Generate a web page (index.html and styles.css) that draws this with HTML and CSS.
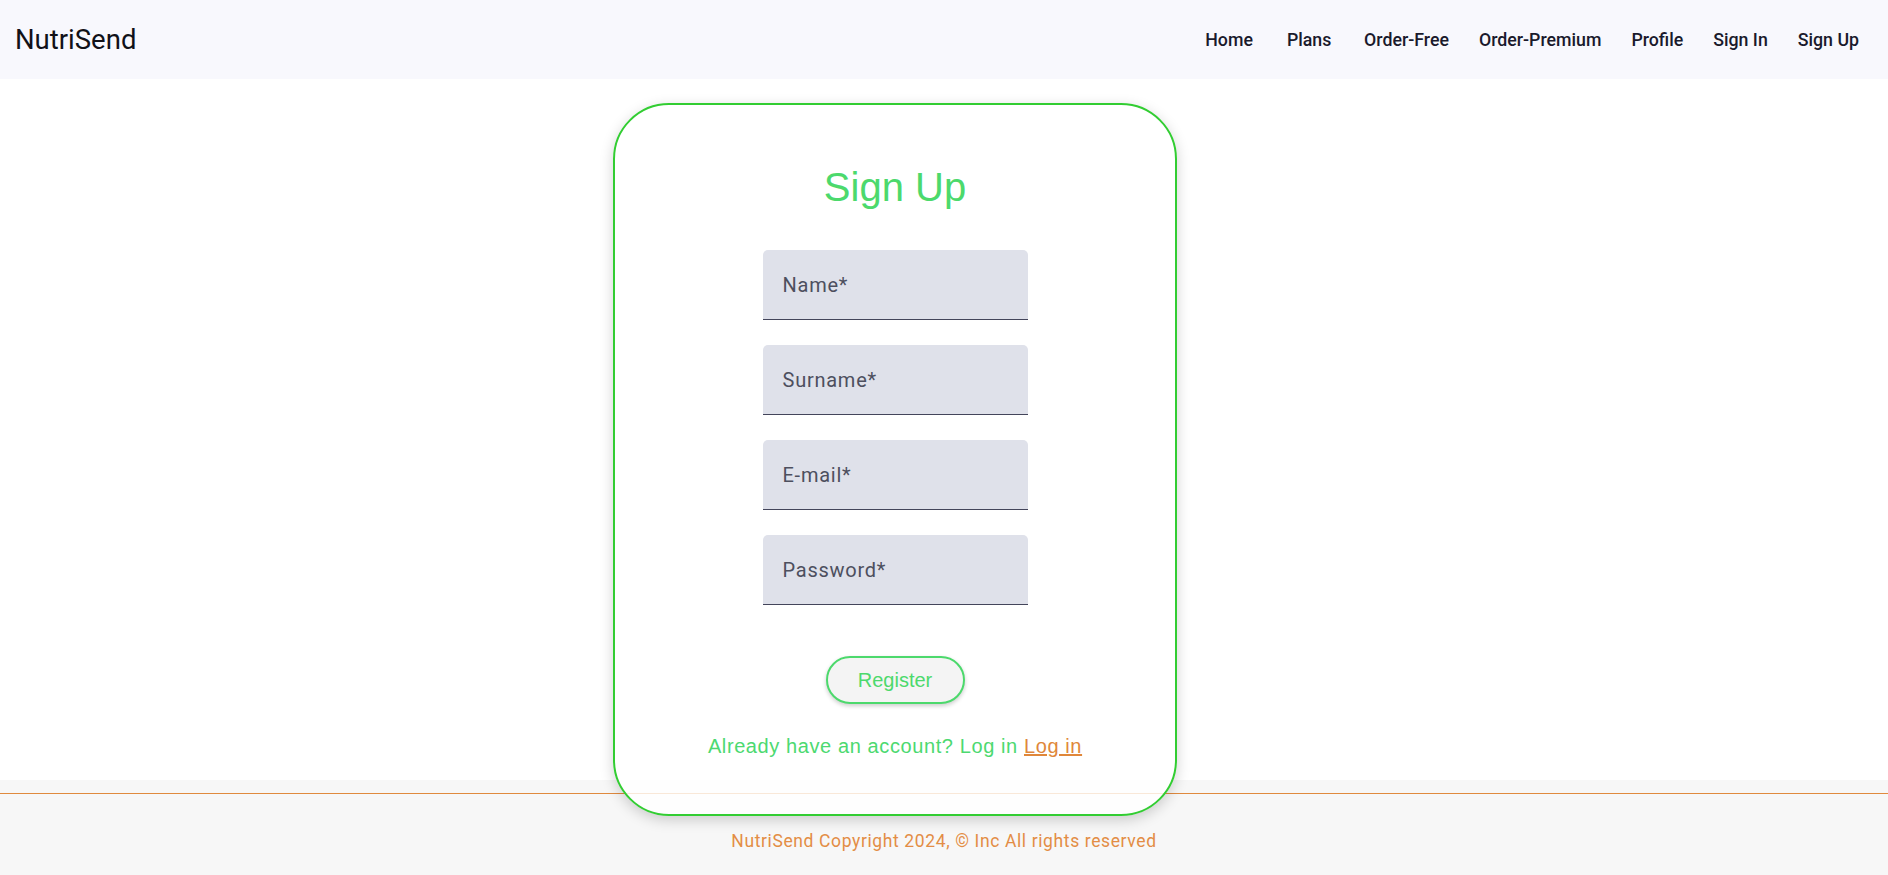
FILE: index.html
```html
<!DOCTYPE html>
<html lang="en">
<head>
<meta charset="utf-8">
<title>NutriSend - Sign Up</title>
<link rel="stylesheet" href="styles.css">
</head>
<body>
<header class="appbar">
  <div class="brand">NutriSend</div>
  <nav class="nav">
    <a class="nav-link" href="#">Home</a>
    <a class="nav-link" href="#">Plans</a>
    <a class="nav-link" href="#">Order-Free</a>
    <a class="nav-link" href="#">Order-Premium</a>
    <a class="nav-link" href="#">Profile</a>
    <a class="nav-link" href="#">Sign In</a>
    <a class="nav-link" href="#">Sign Up</a>
  </nav>
</header>
<main class="main">
  <section class="card">
    <h1 class="card-title">Sign Up</h1>
    <form class="form">
      <label class="field"><span class="field-label">Name*</span></label>
      <label class="field"><span class="field-label">Surname*</span></label>
      <label class="field"><span class="field-label">E-mail*</span></label>
      <label class="field"><span class="field-label">Password*</span></label>
    </form>
    <button class="register" type="button">Register</button>
    <p class="already">Already have an account? Log in <a class="login-link" href="#">Log in</a></p>
  </section>
</main>
<footer class="footer">
  <div class="footer-rule"></div>
  <p class="footer-text">NutriSend Copyright 2024, © Inc All rights reserved</p>
</footer>
</body>
</html>
```
FILE: styles.css
```css
html, body {
  margin: 0;
  padding: 0;
}
body {
  font-family: Roboto, "Liberation Sans", sans-serif;
  background: #ffffff;
  width: 1888px;
  height: 875px;
  overflow: hidden;
}
.appbar {
  height: 79px;
  box-sizing: border-box;
  background: #f8f8fd;
  display: flex;
  align-items: center;
  justify-content: space-between;
  padding: 0 21px 0 15px;
}
.brand {
  font-size: 27.5px;
  color: #111118;
  font-weight: 400;
}
.nav {
  display: flex;
  align-items: center;
  gap: 14px;
}
.nav-link {
  min-width: 66px;
  box-sizing: border-box;
  padding: 6px 8px;
  text-align: center;
  font-size: 17.75px;
  font-weight: 500;
  color: #1a1a2c;
  text-decoration: none;
}
.main {
  height: 701px;
  box-sizing: border-box;
  display: flex;
  justify-content: center;
  align-items: flex-start;
  padding: 24px 98px 0 0;
}
.card {
  position: relative;
  z-index: 1;
  width: 564px;
  height: 713px;
  box-sizing: border-box;
  border: 2px solid #32cd32;
  border-radius: 56px;
  background: rgba(255, 255, 255, 0.8);
  box-shadow: 0 4px 14px rgba(0, 0, 0, 0.18);
  display: flex;
  flex-direction: column;
  align-items: center;
  padding-top: 59px;
}
.card-title {
  margin: 0;
  font-family: "Liberation Sans", Arial, sans-serif;
  font-weight: 400;
  font-size: 40px;
  line-height: 46px;
  color: #4cd96c;
}
.form {
  margin: 40px 0 0 0;
  display: flex;
  flex-direction: column;
  gap: 25px;
}
.field {
  display: block;
  width: 265px;
  height: 70px;
  box-sizing: border-box;
  background: #dfe1ea;
  border-radius: 5px 5px 0 0;
  border-bottom: 1.5px solid #43455a;
  padding: 21px 0 0 20px;
}
.field-label {
  display: block;
  font-size: 20px;
  line-height: 28.75px;
  letter-spacing: 0.75px;
  color: #4d4f5e;
}
.register {
  margin-top: 51px;
  width: 139px;
  height: 48px;
  box-sizing: border-box;
  border: 2px solid #4cd96c;
  border-radius: 24px;
  background: #f4f4f4;
  color: #4cd96c;
  font-family: "Liberation Sans", Arial, sans-serif;
  font-size: 20px;
  box-shadow: 0 2px 4px rgba(0, 0, 0, 0.2);
  cursor: pointer;
}
.already {
  margin: 30px 0 0 0;
  font-family: "Liberation Sans", Arial, sans-serif;
  font-size: 20px;
  line-height: 24px;
  letter-spacing: 0.6px;
  color: #4cd970;
}
.login-link {
  color: #e0873a;
  text-decoration: underline;
}
.footer {
  height: 95px;
  box-sizing: border-box;
  background: #f7f7f7;
  padding-top: 13px;
}
.footer-rule {
  border-top: 1px solid #e08a3e;
}
.footer-text {
  margin: 0;
  padding-top: 37px;
  text-align: center;
  font-size: 17.5px;
  line-height: 20px;
  letter-spacing: 0.62px;
  color: #e38d45;
}
```
